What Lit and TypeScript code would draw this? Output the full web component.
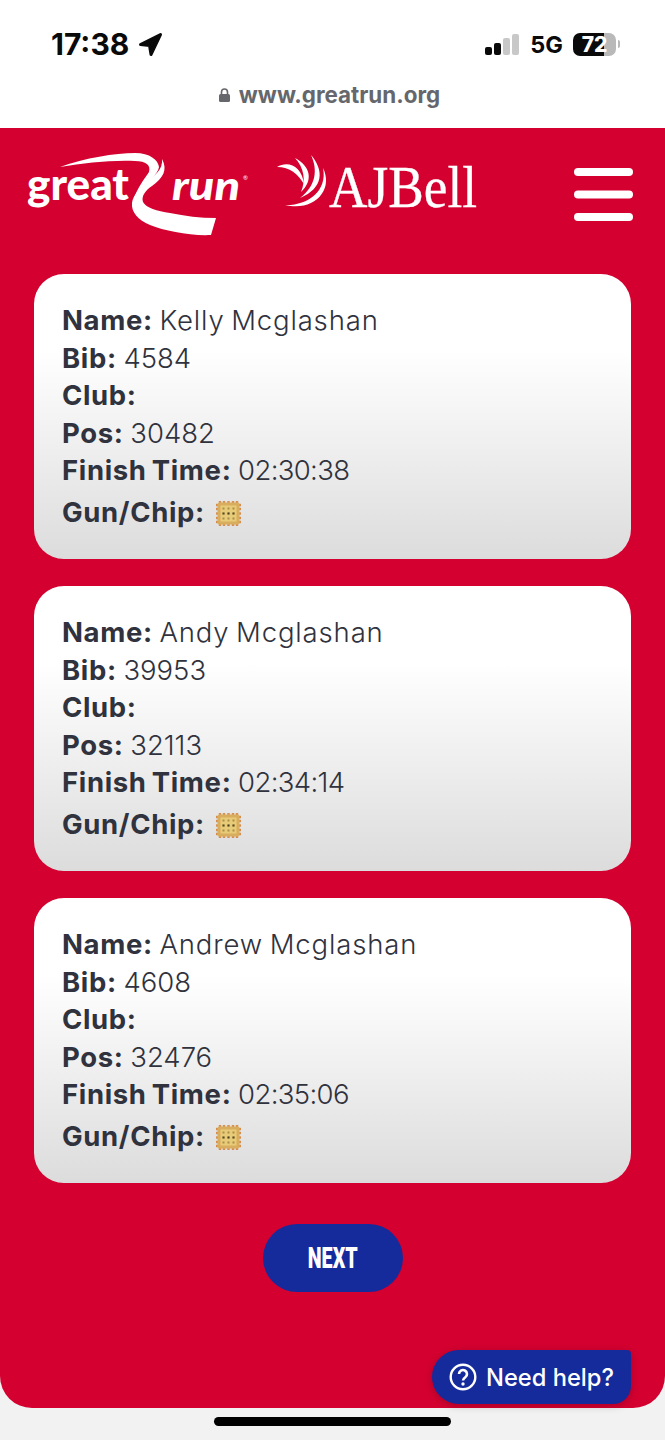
import { LitElement, html, css, svg } from "lit";
import { customElement } from "lit/decorators.js";

const runners = [
  { name: "Kelly Mcglashan", bib: "4584", pos: "30482", time: "02:30:38" },
  { name: "Andy Mcglashan", bib: "39953", pos: "32113", time: "02:34:14" },
  { name: "Andrew Mcglashan", bib: "4608", pos: "32476", time: "02:35:06" },
];

const chipDots = [0, 1, 2].flatMap((r) => [0, 1, 2].map((c) => [7.5 + c * 5, 7.5 + r * 5]));
const chipTeeth = [4, 8, 12.5, 17, 21];

const chip = html`<svg class="chip" viewBox="0 0 25 25" aria-hidden="true">
  ${chipTeeth.map(
    (p) => svg`<rect x="${p - 1.2}" y="0" width="2.4" height="25" fill="#d58d50"/><rect x="0" y="${p - 1.2}" width="25" height="2.4" fill="#d58d50"/>`,
  )}
  <rect x="1.500" y="1.500" width="22" height="22" rx="2" fill="#d9ad5e"/>
  <rect x="4.500" y="4.500" width="16" height="16" fill="#e8cb78"/>
  ${chipDots.map(([x, y]) => svg`<rect x="${x - 1}" y="${y - 1}" width="2" height="2" fill="#a88e48"/>`)}
  <rect x="11.500" y="11.500" width="2" height="2" fill="#4d4326"/>
  <rect x="6.500" y="11.500" width="2" height="2" fill="#5d4e28"/>
  <rect x="16.500" y="11.500" width="2" height="2" fill="#5d4e28"/>
</svg>`;

@customElement("app-root")
export class AppRoot extends LitElement {
  static styles = css`
    :host {
      display: block;
      width: 665px;
      height: 1440px;
      background: #f2f2f2;
      font-family: "Inter", "Liberation Sans", sans-serif;
      overflow: hidden;
    }
    .top {
      height: 128px;
      background: #fff;
      display: flex;
      flex-direction: column;
      box-sizing: border-box;
    }
    .status {
      height: 80px;
      padding: 26px 45px 0 51px;
      box-sizing: border-box;
      display: flex;
      justify-content: space-between;
      align-items: flex-start;
    }
    .clock {
      display: flex;
      align-items: center;
      gap: 9px;
      font-size: 30px;
      font-weight: 700;
      line-height: 36px;
      color: #0a0a0a;
    }
    .clock svg {
      width: 25px;
      height: 25px;
    }
    .sys {
      display: flex;
      align-items: center;
      height: 36px;
      color: #0a0a0a;
      font-weight: 700;
    }
    .signal {
      display: flex;
      align-items: flex-end;
      gap: 2px;
      height: 22px;
      margin-right: 11px;
    }
    .signal i {
      width: 7px;
      border-radius: 2px;
      background: #c8c8c8;
    }
    .signal i.on {
      background: #0a0a0a;
    }
    .fiveg {
      font-size: 23.5px;
      margin-right: 10px;
    }
    .battery {
      width: 43px;
      height: 23px;
      border-radius: 7px;
      background: linear-gradient(90deg, #0a0a0a 0 72%, #b9b9b9 72%);
      color: #fff;
      font-size: 21px;
      font-weight: 800;
      line-height: 23px;
      text-align: center;
    }
    .nub {
      width: 2px;
      height: 8px;
      margin-left: 2px;
      border-radius: 0 2px 2px 0;
      background: #b9b9b9;
    }
    .url {
      display: flex;
      justify-content: center;
      align-items: center;
      gap: 9px;
      padding-right: 6px;
      font-size: 22.4px;
      line-height: 30px;
      font-weight: 700;
      color: #66676c;
    }
    .url svg {
      width: 11px;
      height: 14px;
    }
    main {
      height: 1280px;
      background: #d40030;
      border-radius: 0 0 32px 32px;
      position: relative;
      display: flex;
      flex-direction: column;
    }
    .head {
      height: 146px;
      flex: none;
    }
    .head svg {
      display: block;
      width: 665px;
      height: 146px;
    }
    .cards {
      display: flex;
      flex-direction: column;
      gap: 27.5px;
      padding: 0 34px;
    }
    .card {
      height: 284.500px;
      box-sizing: border-box;
      padding: 28px 28px 0;
      border-radius: 30px;
      background: linear-gradient(180deg, #fff 0 27%, #dcdcdd 100%);
      color: #30323d;
      font-size: 27.5px;
      font-weight: 300;
      line-height: 37.5px;
      letter-spacing: 0.85px;
      word-spacing: -2px;
    }
    .card b {
      font-weight: 700;
      letter-spacing: 0.65px;
    }
    .num {
      letter-spacing: 0;
    }
    .clocktime {
      letter-spacing: -0.65px;
    }
    .gun {
      display: flex;
      align-items: center;
      gap: 11px;
      height: 47px;
    }
    .chip {
      width: 25px;
      height: 25px;
      flex: none;
    }
    .next {
      align-self: center;
      margin-top: 41px;
      width: 140px;
      height: 68px;
      border-radius: 34px;
      background: #152a9b;
      color: #fff;
      display: flex;
      align-items: center;
      justify-content: center;
    }
    .next span {
      display: block;
      font-family: "Roboto", "Liberation Sans", sans-serif;
      font-weight: 900;
      font-size: 29px;
      transform: scaleX(0.68);
    }
    .help {
      position: absolute;
      left: 432px;
      top: 1222px;
      width: 199px;
      height: 54px;
      box-sizing: border-box;
      padding-left: 17px;
      display: flex;
      align-items: center;
      gap: 9px;
      border-radius: 27px 4px 18px 27px;
      background: #152a9b;
      color: #fff;
      font-size: 23.7px;
      font-weight: 500;
      box-shadow: 0 2px 8px rgba(0, 0, 0, 0.2);
    }
    .help svg {
      width: 28px;
      height: 28px;
    }
    .home {
      width: 237px;
      height: 9px;
      margin: 9px auto 0;
      border-radius: 5px;
      background: #000;
    }
  `;

  render() {
    return html`
      <div class="top">
        <div class="status">
          <div class="clock">
            17:38
            <svg viewBox="0 0 25 25"><path d="M2.500 12.500 22.500 2.500 13 22.500 11.500 13.500Z" fill="#0a0a0a" stroke="#0a0a0a" stroke-width="3" stroke-linejoin="round"/></svg>
          </div>
          <div class="sys">
            <div class="signal">
              <i class="on" style="height:8px"></i>
              <i class="on" style="height:12px"></i>
              <i style="height:17px"></i>
              <i style="height:21px"></i>
            </div>
            <span class="fiveg">5G</span>
            <div class="battery">72</div>
            <div class="nub"></div>
          </div>
        </div>
        <div class="url">
          <svg viewBox="0 0 11 14"><path d="M2.500 6V4a3 3 0 0 1 6 0v2" fill="none" stroke="#66676c" stroke-width="1.600"/><rect x="0" y="6" width="11" height="8" rx="1.500" fill="#66676c"/></svg>
          www.greatrun.org
        </div>
      </div>
      <main>
        <div class="head">
          <svg viewBox="0 128 665 146">
            <g fill="#fff">
              <path d="M60 167C85 158 115 153 135 153C150 153 158 160 159 167C158 174 148 182 140 190C138 193 136 196 134 199C137 188 145 178 149 172C151 165 146 161 135 161C110 160 85 163 60 167Z"/>
              <path d="M162 159C168 170 163 178 152 186C146 190 141 196 143 202C146 208 157 211 170 213C185 216 200 218 216 218L211 235C190 236 165 231 150 225C138 220 131 212 132 203C133 195 140 188 146 182C155 175 163 170 162 159Z"/>
              <text x="27" y="200" font-family="Lato, 'Open Sans', sans-serif" font-weight="900" font-size="44" textLength="102" lengthAdjust="spacingAndGlyphs">great</text>
              <text x="172" y="200" font-family="Lato, 'Open Sans', sans-serif" font-weight="900" font-style="italic" font-size="40" textLength="68" lengthAdjust="spacingAndGlyphs">run</text>
              <text x="243" y="180" font-family="Lato, sans-serif" font-size="6">®</text>
              <path d="M277 167C288 160 302 166 304 184C298 174 290 167 277 167Z"/>
              <path d="M295 158C310 166 314 180 301 192C306 180 304 168 295 158Z"/>
              <path d="M311 155C324 170 324 188 300 198C316 186 318 170 311 155Z"/>
              <path d="M323 168C334 190 314 212 285 205C306 206 328 192 323 168Z"/>
              <text x="329" y="207" font-family="'Liberation Serif', serif" font-size="59" textLength="148" lengthAdjust="spacingAndGlyphs" stroke="#fff" stroke-width=".3">AJBell</text>
              <rect x="574" y="168" width="59" height="8" rx="4"/>
              <rect x="574" y="190.500" width="59" height="8" rx="4"/>
              <rect x="574" y="213" width="59" height="8" rx="4"/>
            </g>
          </svg>
        </div>
        <div class="cards">
          ${runners.map(
            (r) => html`<div class="card">
              <div><b>Name:</b> ${r.name}</div>
              <div><b>Bib:</b> <span class="num">${r.bib}</span></div>
              <div><b>Club:</b></div>
              <div><b>Pos:</b> <span class="num">${r.pos}</span></div>
              <div><b>Finish Time:</b> <span class="clocktime">${r.time}</span></div>
              <div class="gun"><b>Gun/Chip:</b>${chip}</div>
            </div>`,
          )}
        </div>
        <div class="next"><span>NEXT</span></div>
        <div class="help">
          <svg viewBox="0 0 28 28"><circle cx="14" cy="14" r="12.300" fill="none" stroke="#fff" stroke-width="2.400"/><path d="M10 11a4 4 0 1 1 6.300 3.300c-1.400 1-2.300 1.700-2.300 3.200" fill="none" stroke="#fff" stroke-width="2.600"/><circle cx="14" cy="21" r="1.700" fill="#fff"/></svg>
          Need help?
        </div>
      </main>
      <div class="home"></div>
    `;
  }
}
